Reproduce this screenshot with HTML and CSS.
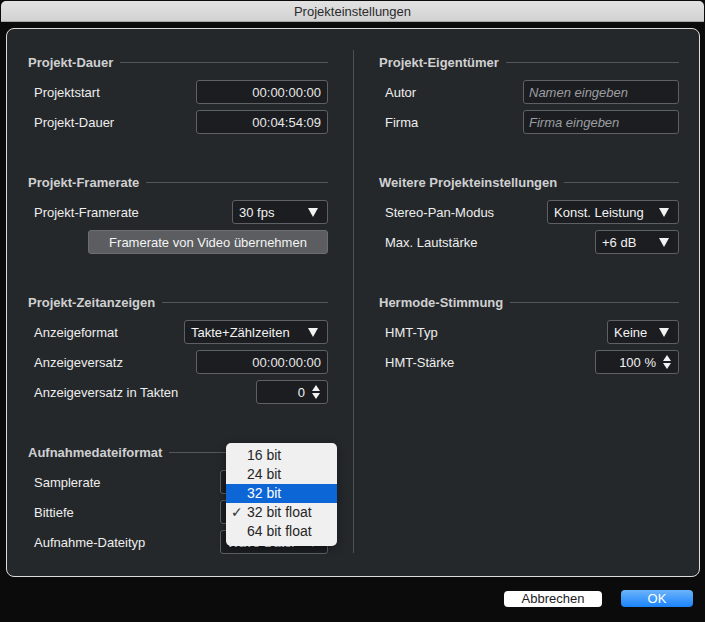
FILE: index.html
```html
<!DOCTYPE html>
<html lang="de">
<head>
<meta charset="utf-8">
<title>Projekteinstellungen</title>
<link rel="stylesheet" href="styles.css">
</head>
<body>
<div class="window">
  <div class="titlebar">Projekteinstellungen</div>
  <div class="panel">
    <div class="col col-left">
      <section class="sec">
        <div class="heading"><span>Projekt-Dauer</span><i class="rule"></i></div>
        <div class="row"><span class="label">Projektstart</span><div class="field w132">00:00:00:00</div></div>
        <div class="row"><span class="label">Projekt-Dauer</span><div class="field w132">00:04:54:09</div></div>
      </section>
      <section class="sec">
        <div class="heading"><span>Projekt-Framerate</span><i class="rule"></i></div>
        <div class="row"><span class="label">Projekt-Framerate</span><div class="select w96"><span>30 fps</span><i class="arrow"></i></div></div>
        <div class="row"><div class="button w240">Framerate von Video übernehmen</div></div>
      </section>
      <section class="sec">
        <div class="heading"><span>Projekt-Zeitanzeigen</span><i class="rule"></i></div>
        <div class="row"><span class="label">Anzeigeformat</span><div class="select w144"><span>Takte+Zählzeiten</span><i class="arrow"></i></div></div>
        <div class="row"><span class="label">Anzeigeversatz</span><div class="field w132">00:00:00:00</div></div>
        <div class="row"><span class="label">Anzeigeversatz in Takten</span><div class="spinner w72"><span>0</span><i class="updown"><b class="up"></b><b class="down"></b></i></div></div>
      </section>
      <section class="sec">
        <div class="heading"><span>Aufnahmedateiformat</span><i class="rule"></i></div>
        <div class="row"><span class="label">Samplerate</span><div class="select w108"><span></span><i class="arrow"></i></div></div>
        <div class="row"><span class="label">Bittiefe</span><div class="select w108"><span></span><i class="arrow"></i></div></div>
        <div class="row"><span class="label">Aufnahme-Dateityp</span><div class="select w108"><span>Wave-Datei</span><i class="arrow"></i></div></div>
      </section>
    </div>
    <div class="divider"></div>
    <div class="col col-right">
      <section class="sec">
        <div class="heading"><span>Projekt-Eigentümer</span><i class="rule"></i></div>
        <div class="row"><span class="label">Autor</span><div class="field placeholder w156">Namen eingeben</div></div>
        <div class="row"><span class="label">Firma</span><div class="field placeholder w156">Firma eingeben</div></div>
      </section>
      <section class="sec">
        <div class="heading"><span>Weitere Projekteinstellungen</span><i class="rule"></i></div>
        <div class="row"><span class="label">Stereo-Pan-Modus</span><div class="select w132"><span>Konst. Leistung</span><i class="arrow"></i></div></div>
        <div class="row"><span class="label">Max. Lautstärke</span><div class="select w84"><span>+6 dB</span><i class="arrow"></i></div></div>
      </section>
      <section class="sec">
        <div class="heading"><span>Hermode-Stimmung</span><i class="rule"></i></div>
        <div class="row"><span class="label">HMT-Typ</span><div class="select w72"><span>Keine</span><i class="arrow"></i></div></div>
        <div class="row"><span class="label">HMT-Stärke</span><div class="spinner w84"><span>100 %</span><i class="updown"><b class="up"></b><b class="down"></b></i></div></div>
      </section>
    </div>
    <ul class="menu">
      <li><span class="check"></span>16 bit</li>
      <li><span class="check"></span>24 bit</li>
      <li class="active"><span class="check"></span>32 bit</li>
      <li><span class="check">✓</span>32 bit float</li>
      <li><span class="check"></span>64 bit float</li>
    </ul>
  </div>
  <div class="footer">
    <div class="btn-cancel">Abbrechen</div>
    <div class="btn-ok">OK</div>
  </div>
</div>
</body>
</html>
```

FILE: styles.css
```css
html, body {
  margin: 0;
  padding: 0;
  background: #0b0b0b;
}
body {
  width: 705px;
  height: 622px;
  overflow: hidden;
  font-family: "Liberation Sans", Arial, sans-serif;
  font-size: 13px;
}
.window {
  width: 705px;
  height: 622px;
  background: #0b0b0b;
  padding-top: 1px;
  box-sizing: border-box;
}
.titlebar {
  height: 21px;
  margin: 0 1px 0 1px;
  border-radius: 5px 5px 0 0;
  background: linear-gradient(#e2e2e2, #d2d2d2);
  border-bottom: 1px solid #a9a9a9;
  box-sizing: border-box;
  color: #2b2b2b;
  text-align: center;
  line-height: 21px;
}
.panel {
  position: relative;
  margin: 6px 0 0 6px;
  width: 694px;
  height: 549px;
  box-sizing: border-box;
  border: 1px solid #dcdcdc;
  border-radius: 8px;
  background: #25282b;
  display: flex;
}
.col {
  box-sizing: border-box;
  padding-top: 25px;
}
.col-left {
  width: 346px;
  padding-left: 21px;
  padding-right: 25px;
}
.col-right {
  width: 345px;
  padding-left: 25px;
  padding-right: 20px;
}
.divider {
  width: 1px;
  background: #4e5154;
  margin: 21px 0 23px 0;
}
.sec {
  display: flex;
  flex-direction: column;
  gap: 6px;
  margin-bottom: 40px;
}
.heading {
  display: flex;
  align-items: center;
  height: 16px;
  margin-bottom: 4px;
  font-weight: bold;
  color: #cfd0d1;
}
.rule {
  flex: 1;
  height: 1px;
  background: #55585b;
  margin-left: 7px;
}
.row {
  display: flex;
  align-items: center;
  height: 24px;
  justify-content: space-between;
}
.label {
  padding-left: 6px;
  color: #eeeeee;
}
.field, .select, .spinner, .button {
  margin-left: auto;
  box-sizing: border-box;
  height: 24px;
  border: 1px solid #5e6164;
  border-radius: 3px;
  background: #1b1d20;
  color: #e8e8e8;
  display: flex;
  align-items: center;
}
.field {
  justify-content: flex-end;
  padding-right: 6px;
}
.field.placeholder {
  justify-content: flex-start;
  padding-left: 5px;
  font-style: italic;
  color: #9c9ea0;
}
.select {
  padding: 0 9px 0 6px;
  justify-content: space-between;
  color: #f2f2f2;
}
.arrow {
  width: 0;
  height: 0;
  border-left: 5px solid transparent;
  border-right: 5px solid transparent;
  border-top: 9px solid #f2f2f2;
}
.spinner {
  justify-content: flex-end;
  padding-right: 7px;
  gap: 7px;
  color: #f2f2f2;
}
.updown {
  display: flex;
  flex-direction: column;
  gap: 2px;
}
.up, .down {
  width: 0;
  height: 0;
  border-left: 4px solid transparent;
  border-right: 4px solid transparent;
}
.up { border-bottom: 6px solid #f2f2f2; }
.down { border-top: 6px solid #f2f2f2; }
.button {
  justify-content: center;
  background: #5b5d60;
  border-color: #6c6e71;
  color: #f4f4f4;
}
.w72 { width: 72px; }
.w84 { width: 84px; }
.w96 { width: 96px; }
.w108 { width: 108px; }
.w132 { width: 132px; }
.w144 { width: 144px; }
.w156 { width: 156px; }
.w240 { width: 240px; }
.menu {
  position: absolute;
  left: 219px;
  top: 414px;
  width: 111px;
  height: 103px;
  margin: 0;
  padding: 3px 0 0 0;
  box-sizing: border-box;
  list-style: none;
  background: #f0f0f0;
  border-radius: 5px;
  box-shadow: 0 2px 8px rgba(0,0,0,0.45);
  font-size: 14px;
  color: #262626;
}
.menu li {
  height: 19px;
  line-height: 19px;
  display: flex;
  align-items: center;
}
.menu li.active {
  background: #0c66d6;
  color: #ffffff;
}
.check {
  width: 21px;
  padding-left: 5px;
  box-sizing: border-box;
  font-family: "DejaVu Sans", sans-serif;
  font-size: 14px;
  color: #333;
}
.footer {
  display: flex;
  justify-content: flex-end;
  align-items: center;
  gap: 19px;
  padding: 13px 12px 0 0;
}
.btn-cancel {
  width: 98px;
  height: 16px;
  line-height: 16px;
  background: #ffffff;
  border-radius: 4px;
  text-align: center;
  color: #1c1c1c;
}
.btn-ok {
  width: 72px;
  height: 17px;
  line-height: 17px;
  border-radius: 4px;
  background: linear-gradient(#6cb3fb, #1a84fb);
  color: #ffffff;
  text-align: center;
}
```
